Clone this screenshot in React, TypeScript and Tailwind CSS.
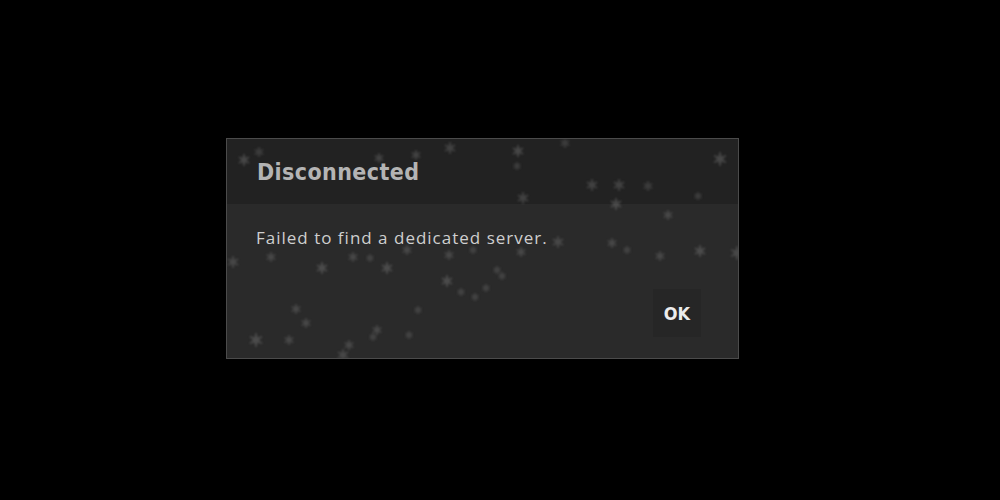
import React from "react";

// Faint six-point star sprites scattered over the dialog.
const stars: [number, number, number, number][] = [
  [17, 21, 5, 0.35], [32, 13, 4, 0.25], [152, 19, 4, 0.3], [189, 16, 4, 0.3],
  [223, 9, 5, 0.3], [291, 12, 5, 0.35], [290, 27, 3, 0.25], [365, 46, 5, 0.3],
  [392, 46, 5, 0.3], [421, 47, 4, 0.25], [389, 65, 5, 0.35], [296, 59, 5, 0.3],
  [441, 76, 4, 0.3], [493, 20, 6, 0.35], [471, 57, 3, 0.25], [338, 4, 4, 0.25],
  [6, 123, 5, 0.3], [44, 118, 4, 0.3], [95, 129, 5, 0.35], [126, 118, 4, 0.3],
  [143, 119, 3, 0.25], [160, 129, 5, 0.35], [180, 111, 4, 0.3], [220, 142, 5, 0.35],
  [222, 116, 4, 0.3], [246, 111, 3, 0.25], [248, 158, 3, 0.25], [270, 131, 3, 0.25],
  [294, 113, 4, 0.3], [331, 103, 5, 0.3], [385, 104, 4, 0.3], [400, 111, 3, 0.25],
  [433, 117, 4, 0.3], [473, 112, 5, 0.35], [510, 114, 6, 0.3], [79, 184, 4, 0.3],
  [69, 170, 4, 0.3], [29, 201, 6, 0.35], [62, 201, 4, 0.3], [122, 206, 4, 0.3],
  [150, 191, 4, 0.3], [146, 198, 3, 0.25], [116, 216, 5, 0.3], [191, 171, 3, 0.25],
  [182, 196, 3, 0.25], [259, 149, 3, 0.25], [275, 137, 3, 0.25], [234, 153, 3, 0.25],
];

function Star({ x, y, r, o }: { x: number; y: number; r: number; o: number }) {
  const arms = [90, 150, 210].map((a) => {
    const rad = (a * Math.PI) / 180;
    const dx = Math.cos(rad) * r;
    const dy = Math.sin(rad) * r;
    return (
      <line key={a} x1={x - dx} y1={y - dy} x2={x + dx} y2={y + dy} stroke="#8a8a8a" strokeWidth={2} strokeLinecap="round" />
    );
  });
  return (
    <g opacity={o}>
      {arms}
      <circle cx={x} cy={y} r={r * 0.6} fill="#8a8a8a" />
    </g>
  );
}

export default function App() {
  return (
    <div className="w-[1000px] h-[500px] bg-black pl-[226px] pt-[138px]">
      <div className="relative w-[513px] h-[221px] border border-[#4b4b4b] bg-[#2a2a2a] flex flex-col overflow-hidden">
        <div className="h-[65px] bg-[#222222] flex items-center pl-[30px] pt-[1px]">
          <span
            className="text-[23px] font-bold text-[#b4b4b4] tracking-[0.4px]"
            style={{ fontFamily: '"DejaVu Sans Condensed", "DejaVu Sans", sans-serif', fontStretch: "condensed" }}
          >
            Disconnected
          </span>
        </div>
        <div className="flex-1 flex flex-col pl-[29px] pr-[37px] pt-[23px]">
          <p
            className="text-[17px] leading-[22px] text-[#cfcfcf] tracking-[1px]"
            style={{ fontFamily: '"Open Sans", "Noto Sans", sans-serif' }}
          >
            Failed to find a dedicated server.
          </p>
          <div className="flex justify-end mt-[40px]">
            <button
              className="w-[48px] h-[48px] bg-[#262626] text-[#ececec] text-[18px] font-bold flex items-center justify-center"
              style={{ fontFamily: '"DejaVu Sans Condensed", "DejaVu Sans", sans-serif', fontStretch: "condensed" }}
            >
              OK
            </button>
          </div>
        </div>
        <svg
          className="absolute inset-0 pointer-events-none blur-[1px]"
          width="513"
          height="221"
          viewBox="0 0 513 221"
        >
          {stars.map(([x, y, r, o], i) => (
            <Star key={i} x={x} y={y} r={r} o={o} />
          ))}
        </svg>
      </div>
    </div>
  );
}
